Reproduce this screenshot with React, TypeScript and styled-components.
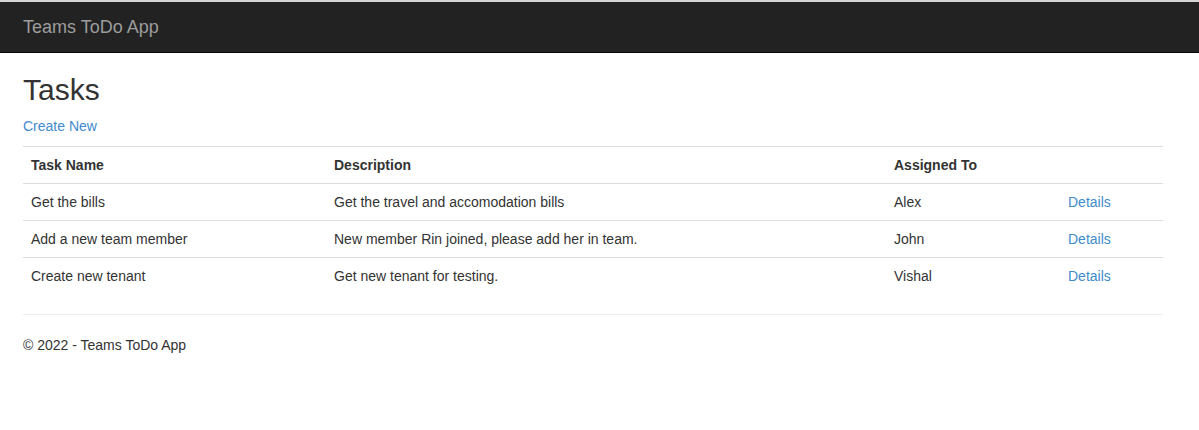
import styled, { createGlobalStyle } from "styled-components";

const GlobalStyle = createGlobalStyle`
    html, body {
        margin: 0;
        padding: 0;
        background: #ffffff;
    }
    body {
        font-family: "Liberation Sans", Arial, sans-serif;
        font-size: 14px;
        line-height: 20px;
        color: #333333;
    }
    * {
        box-sizing: border-box;
    }
`

interface Task {
    name: string
    description: string
    assignedTo: string
}

const tasks: Task[] = [
    { name: "Get the bills", description: "Get the travel and accomodation bills", assignedTo: "Alex" },
    { name: "Add a new team member", description: "New member Rin joined, please add her in team.", assignedTo: "John" },
    { name: "Create new tenant", description: "Get new tenant for testing.", assignedTo: "Vishal" },
];

export default function App() {
    return (
        <>
            <GlobalStyle />
            <Navbar>
                <Container>
                    <Brand href="#">Teams ToDo App</Brand>
                </Container>
            </Navbar>
            <Container>
                <Title>Tasks</Title>
                <Para><Link href="#">Create New</Link></Para>
                <Table>
                    <colgroup>
                        <col style={{ width: 303 }} />
                        <col style={{ width: 560 }} />
                        <col style={{ width: 174 }} />
                        <col style={{ width: 103 }} />
                    </colgroup>
                    <thead>
                        <tr>
                            <Th>Task Name</Th>
                            <Th>Description</Th>
                            <Th>Assigned To</Th>
                            <Th></Th>
                        </tr>
                    </thead>
                    <tbody>
                        {tasks.map((t) => (
                            <tr key={t.name}>
                                <Td>{t.name}</Td>
                                <Td>{t.description}</Td>
                                <Td>{t.assignedTo}</Td>
                                <Td><Link href="#">Details</Link></Td>
                            </tr>
                        ))}
                    </tbody>
                </Table>
                <Rule />
                <Footer>
                    <Para>&copy; 2022 - Teams ToDo App</Para>
                </Footer>
            </Container>
        </>
    )
}

const Navbar = styled.nav`
    background-color: #222222;
    border-top: 2px solid #d6d6d6;
    border-bottom: 1px solid #080808;
    height: 53px;
`

const Container = styled.div`
    width: 1140px;
    margin-left: 23px;
`

const Brand = styled.a`
    display: block;
    height: 50px;
    padding: 15px 0;
    font-size: 18px;
    line-height: 20px;
    color: #9d9d9d;
    text-decoration: none;
`

const Title = styled.h2`
    margin: 20px 0 10px;
    font-size: 30px;
    line-height: 33px;
    font-weight: 500;
    color: #333333;
`

const Para = styled.p`
    margin: 0 0 10px;
`

const Link = styled.a`
    color: #428bca;
    text-decoration: none;
`

const Table = styled.table`
    width: 100%;
    border-collapse: collapse;
    border-spacing: 0;
    table-layout: fixed;
    margin-bottom: 20px;
`

const Th = styled.th`
    padding: 8px;
    line-height: 20px;
    text-align: left;
    font-weight: bold;
    vertical-align: bottom;
    border-top: 1px solid #dddddd;
`

const Td = styled.td`
    padding: 8px;
    line-height: 20px;
    vertical-align: top;
    border-top: 1px solid #dddddd;
`

const Rule = styled.hr`
    margin: 20px 0;
    border: 0;
    border-top: 1px solid #eeeeee;
`

const Footer = styled.footer`
    padding-bottom: 20px;
`
